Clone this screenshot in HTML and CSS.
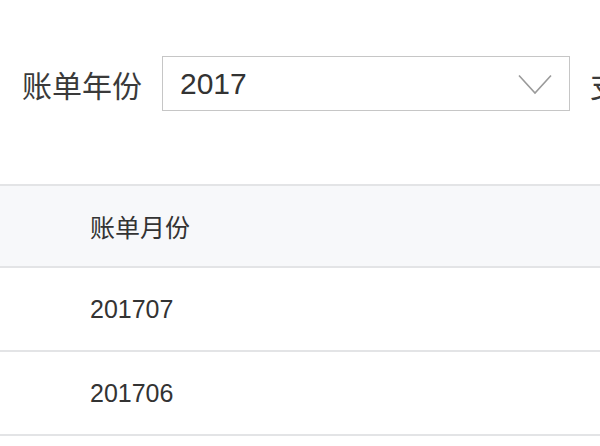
FILE: index.html
```html
<!DOCTYPE html>
<html lang="zh-CN">
<head>
<meta charset="utf-8">
<link rel="stylesheet" href="styles.css">
</head>
<body>
<div class="filter">
  <span class="label">账单年份</span>
  <div class="select">
    <span class="value">2017</span>
    <svg class="chev" width="34" height="21" viewBox="0 0 34 21"><path d="M1 1.5 L17 19 L33 1.5" fill="none" stroke="#9a9a9a" stroke-width="1.6"/></svg>
  </div>
  <span class="label">支付状态</span>
</div>
<div class="table">
  <div class="row head"><span class="cell">账单月份</span></div>
  <div class="row"><span class="cell">201707</span></div>
  <div class="row"><span class="cell">201706</span></div>
</div>
</body>
</html>
```
FILE: styles.css
```css
html, body {
  margin: 0;
  padding: 0;
  background: #ffffff;
  overflow: hidden;
}
body {
  width: 600px;
  height: 446px;
  font-family: "Liberation Sans", "Noto Sans CJK SC", sans-serif;
  color: #333333;
}
.filter {
  display: flex;
  align-items: center;
  gap: 20px;
  padding: 56px 0 0 22px;
  white-space: nowrap;
}
.label {
  font-size: 30px;
  color: #3a3a3a;
  flex: none;
}
.select {
  flex: none;
  box-sizing: border-box;
  width: 408px;
  height: 55px;
  border: 1px solid #c6c6c6;
  display: flex;
  align-items: center;
  justify-content: space-between;
  padding: 0 17px 0 17px;
}
.value {
  font-size: 30px;
  color: #333333;
}
.chev {
  display: block;
  margin-top: 2px;
}
.table {
  margin-top: 73px;
  border-top: 2px solid #e3e4e6;
}
.row {
  height: 82px;
  border-bottom: 2px solid #e3e4e6;
  display: flex;
  align-items: center;
  padding-left: 90px;
}
.row.head {
  height: 80px;
  background: #f7f8fa;
}
.cell {
  font-size: 25px;
  color: #333333;
}
```
